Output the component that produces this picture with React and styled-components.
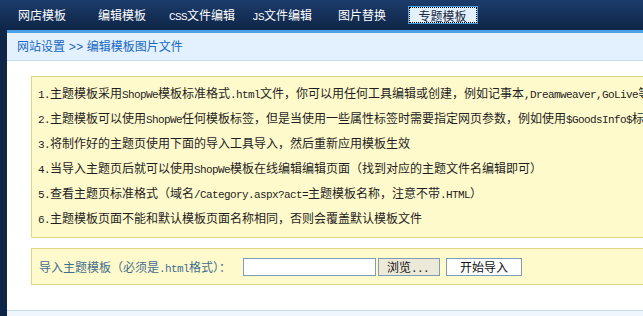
import React from 'react';
import styled, { createGlobalStyle } from 'styled-components';

const Global = createGlobalStyle`
  html, body {
    margin: 0;
    padding: 0;
    height: 100%;
    overflow: hidden;
  }
  body {
    background: #0f2547;
    font-family: "Noto Sans CJK SC", "DejaVu Sans", sans-serif;
    font-size: 12px;
  }
  #root {
    height: 100%;
  }
`;

// SimSun-like half width latin runs (6px per char)
const Lat = styled.span`
  font-family: "Liberation Mono", "DejaVu Sans Mono", monospace;
  font-size: 11px;
  letter-spacing: -0.6px;
`;

function mix(str) {
  return str.split(/([\x20-\x7e]+)/).map((part, i) =>
    /^[\x20-\x7e]+$/.test(part) ? <Lat key={i}>{part}</Lat> : part
  );
}

const tabs = ['网店模板', '编辑模板', 'CSS文件编辑', 'JS文件编辑', '图片替换', '专题模板'];

const notes = [
  '1.主题模板采用ShopWe模板标准格式.html文件，你可以用任何工具编辑或创建，例如记事本,Dreamweaver,GoLive等工具',
  '2.主题模板可以使用ShopWe任何模板标签，但是当使用一些属性标签时需要指定网页参数，例如使用$GoodsInfo$标签',
  '3.将制作好的主题页使用下面的导入工具导入，然后重新应用模板生效',
  '4.当导入主题页后就可以使用ShopWe模板在线编辑编辑页面（找到对应的主题文件名编辑即可）',
  '5.查看主题页标准格式（域名/Category.aspx?act=主题模板名称，注意不带.HTML）',
  '6.主题模板页面不能和默认模板页面名称相同，否则会覆盖默认模板文件',
];

export default function App() {
  return (
    <>
      <Global />
      <Page>
        <Nav>
          {tabs.map((t, i) => (
            <NavCell key={t}>
              <NavItem $active={i === tabs.length - 1}>{mix(t)}</NavItem>
            </NavCell>
          ))}
        </Nav>
        <Panel>
          <Crumb>网站设置 <Arrow>&gt;&gt;</Arrow> 编辑模板图片文件</Crumb>
          <Content>
            <Notice>
              {notes.map((n) => (
                <NoteLine key={n}>{mix(n)}</NoteLine>
              ))}
            </Notice>
            <ImportBox>
              <Label>{mix('导入主题模板（必须是.html格式）：')}</Label>
              <FileInput />
              <Button $grey>浏览<Lat>...</Lat></Button>
              <Button $wide>开始导入</Button>
            </ImportBox>
          </Content>
          <Footer />
        </Panel>
      </Page>
    </>
  );
}

const Page = styled.div`
  height: 100%;
  display: flex;
  flex-direction: column;
`;

const Nav = styled.div`
  height: 30px;
  display: flex;
  align-items: center;
  padding-left: 2px;
  background: linear-gradient(#1c3c6b, #0e2547);
`;

const NavCell = styled.div`
  width: 80px;
  display: flex;
  justify-content: center;
`;

const NavItem = styled.div`
  height: 18px;
  line-height: 17px;
  box-sizing: border-box;
  white-space: nowrap;
  color: ${(p) => (p.$active ? '#1a2640' : '#ffffff')};
  ${(p) =>
    p.$active &&
    `
    width: 70px;
    margin-left: 1px;
    text-align: center;
    background: #e3f1fd;
    border: 1px solid #4aa2e4;
    outline: 1px dotted #000;
    outline-offset: -2px;
  `}
`;

const Panel = styled.div`
  flex: 1;
  margin-left: 7px;
  background: #fff;
  display: flex;
  flex-direction: column;
  overflow: hidden;
`;

const Crumb = styled.div`
  height: 27px;
  line-height: 26px;
  padding-left: 10px;
  border-top: 3px solid #4aa2e4;
  border-bottom: 1px solid #c6dbed;
  background: #e2f1fd;
  color: #1767c3;
  white-space: nowrap;
`;

const Arrow = styled.span`
  font-family: "Liberation Mono", monospace;
  font-size: 12px;
  margin: 0 1px;
`;

const Content = styled.div`
  padding: 15px 0 25px 24px;
`;

const Notice = styled.div`
  width: 700px;
  padding: 3px 0 7px 6px;
  background: #fffacc;
  border: 1px solid #e0d783;
  color: #1e1e1e;
`;

const NoteLine = styled.div`
  height: 25px;
  line-height: 25px;
  white-space: nowrap;
`;

const ImportBox = styled.div`
  width: 700px;
  height: 35px;
  margin-top: 10px;
  padding-left: 7px;
  display: flex;
  align-items: center;
  background: #fffacc;
  border: 1px solid #e0d783;
`;

const Label = styled.span`
  color: #426d8e;
  white-space: nowrap;
  width: 204px;
`;

const FileInput = styled.div`
  width: 133px;
  height: 18px;
  box-sizing: border-box;
  border: 1px solid #7f9db9;
  background: #fff;
`;

const Button = styled.div`
  width: ${(p) => (p.$wide ? '76px' : '62px')};
  height: 18px;
  margin-left: ${(p) => (p.$wide ? '6px' : '2px')};
  box-sizing: border-box;
  border: 1px solid #7f9db9;
  background: ${(p) => (p.$grey ? '#ece9d8' : '#fff')};
  color: #111;
  text-align: center;
  line-height: 16px;
  ${(p) => p.$grey && 'text-align: left; padding-left: 8px;'}
`;

const Footer = styled.div`
  flex: 1;
  border-top: 1px solid #c6dbed;
  background: #eff6fd;
`;
